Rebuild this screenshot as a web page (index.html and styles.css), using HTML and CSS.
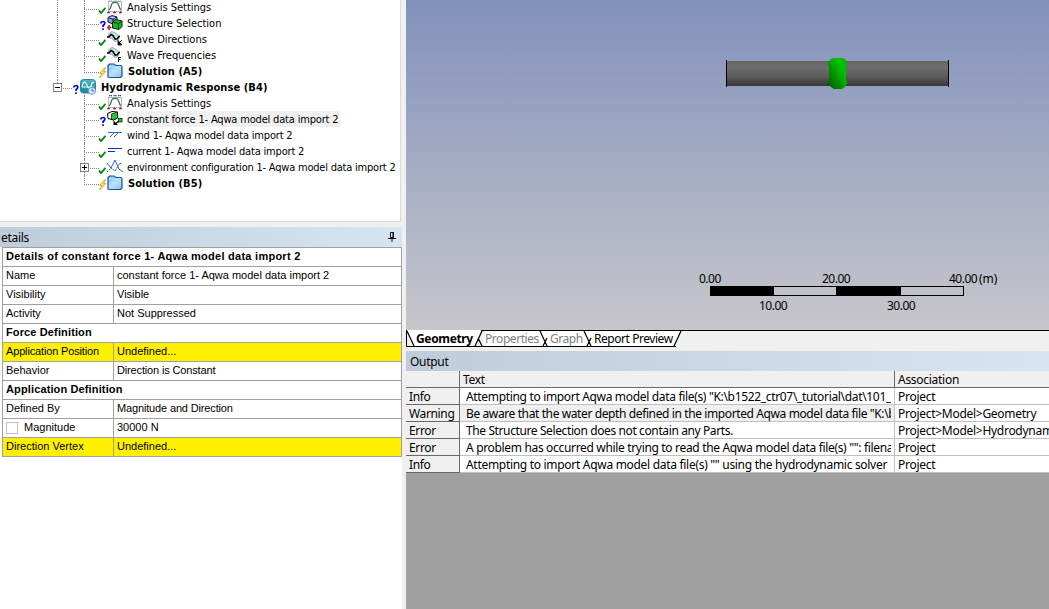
FILE: index.html
```
<!DOCTYPE html>
<html lang="en">
<head>
<meta charset="utf-8">
<title>Hydrodynamic Response</title>
<link rel="stylesheet" href="styles.css">
</head>
<body>
<svg class="defs" width="0" height="0">
  <defs>
    <linearGradient id="fold" x1="0" y1="0" x2="1" y2="1"><stop offset="0" stop-color="#74bdf5"/><stop offset=".5" stop-color="#bde2fc"/><stop offset="1" stop-color="#7cc4f8"/></linearGradient>
    <linearGradient id="teal" x1="0" y1="0" x2="0" y2="1"><stop offset="0" stop-color="#58b5c4"/><stop offset="1" stop-color="#168499"/></linearGradient>
    <linearGradient id="ball" x1="0" y1="1" x2="1" y2="0"><stop offset="0" stop-color="#005c00"/><stop offset=".35" stop-color="#008c00"/><stop offset=".7" stop-color="#00c400"/><stop offset="1" stop-color="#00b000"/></linearGradient>
    <linearGradient id="pipe" x1="0" y1="0" x2="0" y2="1"><stop offset="0" stop-color="#646464"/><stop offset=".25" stop-color="#6e6e6e"/><stop offset=".6" stop-color="#5c5c5c"/><stop offset="1" stop-color="#383838"/></linearGradient>
    <symbol id="check" viewBox="0 0 8 16"><path d="M1 11.500 L3 14 L7.500 9" fill="none" stroke="#088c10" stroke-width="1.900"/></symbol>
    <symbol id="question" viewBox="0 0 8 16"><path d="M2.500 8.500 Q3 6.500 5 6.500 Q7 6.700 6.800 8.500 Q6.500 9.800 5 10.500 V12 M5 13.200 V15" fill="none" stroke="#0008f4" stroke-width="1.700"/></symbol>
    <symbol id="bolt" viewBox="0 0 8 16"><path d="M7 4.500 L1.500 10.500 H4 L1.500 15 L8 8.500 H5.500 L8 4.500Z" fill="#ffe23c" stroke="#c79a16" stroke-width=".7"/></symbol>
    <symbol id="settings" viewBox="0 0 16 16"><path d="M1.500 2 V13 M14.500 2 V13 M1 2.500 H15 M1 12.500 H15" stroke="#b8b8b8" fill="none"/><path d="M2 11 C4 10 4 4.500 6 3.500 H10 C12 4.500 12 10 14 11" fill="none" stroke="#35784e" stroke-width="1.300"/><path d="M2 .5 H5 M6.500 .5 H9.500 M11 .5 H14" stroke="#2843bd" stroke-width="1.500" stroke-dasharray="1.300 .4"/><path d="M0 14 L1.500 12.500 L3 14Z M6 14 L7.500 12.500 L9 14Z M12 14 L13.500 12.500 L15 14Z" fill="#b80024" stroke="#b80024" stroke-width=".5"/></symbol>
    <symbol id="cubes" viewBox="0 0 16 16"><path d="M1 2.500 L5 .5 L10 2 V7 L6 9 L1 7Z M1 2.500 L6 4 L10 2 M6 4 V9" fill="#9299d1" stroke="#10194f"/><path d="M5.500 7 L9 4.500 L15 6 V11.500 L12 14.500 L5.500 13Z" fill="#10b92c" stroke="#002800"/><path d="M5.500 7 L11.500 8.500 L15 6 M11.500 8.500 V14" fill="none" stroke="#003b00"/><path d="M2 10 V15 M-.5 12.500 H4.500" stroke="#c51521" stroke-width="1.500"/></symbol>
    <symbol id="wave" viewBox="0 0 16 16"><path d="M1 6 C2 0 6 0 8 2 L12 5 C12 11 7 12 6 8Z" fill="#c4ecec" stroke="#777" stroke-width=".7"/><path d="M0 6 H2 L4 3.500 L6 4.500 L8 8 L10 8 L12 5.500 H13" fill="none" stroke="#000" stroke-width="1.600"/></symbol>
    <symbol id="folder" viewBox="0 0 16 16"><path d="M1 14 V2.500 L2.500 1 H7 L9 2.500 H14 L15 4 V13 L13.500 14.500 H2Z" fill="url(#fold)" stroke="#1b4f9d" stroke-width="1.200"/><path d="M2.500 4.500 L3.500 2.500" stroke="#e5f5ff"/></symbol>
    <symbol id="response" viewBox="0 0 16 16"><rect x=".5" y=".5" width="15" height="13.500" rx="3" fill="url(#teal)" stroke="#2d8497"/><path d="M2 8 C3 2 5 2 7 6 C9 12 11 8 12 4 L14 3 M2 8 H13" fill="none" stroke="#e1ffff" stroke-width="1.200"/><circle cx="12" cy="11.800" r="3.500" fill="#dce9ff" stroke="#7692d0"/><path d="M12 9.500 V12 H14" fill="none" stroke="#294a9d" stroke-width=".8"/></symbol>
    <symbol id="force" viewBox="0 0 16 16"><path d="M.5 2.500 L5 .5 L10.500 1 V7 L6.500 9 L1 7.500Z" fill="#fff" stroke="#000"/><path d="M4.500 3 L10.500 1 V7 L6.500 9 L4.500 8Z" fill="#15cc36" stroke="#000" stroke-width=".7"/><path d="M12 10 L8 13" stroke="#000" stroke-width="1.300"/><path d="M6.500 9.500 V14 H11Z" fill="#000"/><rect x="11.500" y="7.500" width="3.500" height="3.500" fill="#13ce33" stroke="#000" stroke-width=".7"/></symbol>
    <symbol id="wind" viewBox="0 0 16 16"><path d="M1 5.500 H15" stroke="#1d76bd"/><path d="M3 10 L7 6 M7 10 L11 6" stroke="#3a658b" stroke-width="1"/></symbol>
    <symbol id="current" viewBox="0 0 16 16"><path d="M1 5.500 H15 M1 8.500 H8" stroke="#0837a9"/></symbol>
    <symbol id="environment" viewBox="0 0 16 16"><path d="M0 4 L4 9 L8 1 L12 10 L16 13" fill="none" stroke="#2d62b6"/><path d="M0 13 L4 9 L8 12 L12 5 L15 4" fill="none" stroke="#2d62b6" stroke-dasharray="2 .7"/></symbol>
  </defs>
</svg>
<div class="app">
  <div class="left">
    <section class="tree">
      <div class="row leaf"><svg class="status"><use href="#check"/></svg><svg class="icon"><use href="#settings"/></svg><span class="short">Analysis Settings</span></div>
      <div class="row leaf"><svg class="status"><use href="#question"/></svg><svg class="icon"><use href="#cubes"/></svg><span class="short">Structure Selection</span></div>
      <div class="row leaf"><svg class="status"><use href="#check"/></svg><svg class="icon" viewBox="0 0 16 16"><use href="#wave"/><path d="M15 9 L12 12 M11 9.500 V14 H15Z" stroke="#000" stroke-width=".8"/></svg><span class="short">Wave Directions</span></div>
      <div class="row leaf"><svg class="status"><use href="#check"/></svg><svg class="icon" viewBox="0 0 16 16"><use href="#wave"/><path d="M14 10.500 H11.500 V15 M11.500 12.500 H13.500" fill="none" stroke="#000"/></svg><span class="short">Wave Frequencies</span></div>
      <div class="row leaf last"><svg class="status"><use href="#bolt"/></svg><svg class="icon"><use href="#folder"/></svg><span class="strong">Solution (A5)</span></div>
      <div class="row root"><i class="toggle"></i><svg class="status"><use href="#question"/></svg><svg class="icon"><use href="#response"/></svg><span class="strong">Hydrodynamic Response (B4)</span></div>
      <div class="row leaf under"><svg class="status"><use href="#check"/></svg><svg class="icon"><use href="#settings"/></svg><span class="short">Analysis Settings</span></div>
      <div class="row leaf under"><svg class="status"><use href="#question"/></svg><svg class="icon"><use href="#force"/></svg><span class="selected">constant force 1- Aqwa model data import 2</span></div>
      <div class="row leaf under"><svg class="status"><use href="#check"/></svg><svg class="icon"><use href="#wind"/></svg><span>wind 1- Aqwa model data import 2</span></div>
      <div class="row leaf under"><svg class="status"><use href="#check"/></svg><svg class="icon"><use href="#current"/></svg><span>current 1- Aqwa model data import 2</span></div>
      <div class="row leaf under"><i class="toggle plus"></i><svg class="status"><use href="#check"/></svg><svg class="icon"><use href="#environment"/></svg><span class="long">environment configuration 1- Aqwa model data import 2</span></div>
      <div class="row leaf under last"><svg class="status"><use href="#bolt"/></svg><svg class="icon"><use href="#folder"/></svg><span class="strong">Solution (B5)</span></div>
    </section>
    <section class="details">
      <header class="bar"><span class="bar-title">etails</span><svg class="pin" width="8" height="12"><path d="M2.500 1.500 H5.500 V6.500 H2.500Z M5 1 V7 M0 7.500 H8 M4 8 V11" fill="none" stroke="#111"/></svg></header>
      <div class="grid">
        <div class="group title">Details of constant force 1- Aqwa model data import 2</div>
        <div class="prop"><span>Name</span><span>constant force 1- Aqwa model data import 2</span></div>
        <div class="prop"><span>Visibility</span><span>Visible</span></div>
        <div class="prop"><span>Activity</span><span>Not Suppressed</span></div>
        <div class="group">Force Definition</div>
        <div class="prop missing"><span class="tight">Application Position</span><span>Undefined...</span></div>
        <div class="prop"><span>Behavior</span><span class="tight">Direction is Constant</span></div>
        <div class="group">Application Definition</div>
        <div class="prop"><span>Defined By</span><span class="tight">Magnitude and Direction</span></div>
        <div class="prop"><span><i class="box"></i>Magnitude</span><span>30000 N</span></div>
        <div class="prop missing"><span>Direction Vertex</span><span>Undefined...</span></div>
      </div>
    </section>
  </div>
  <div class="right">
    <section class="view">
      <svg width="643" height="330">
        <rect x="320" y="61" width="223" height="25" fill="url(#pipe)"/>
        <path d="M320.500 60 V87 M542.500 60 V87" stroke="#000"/>
        <path d="M425 59 L428 58 H436 L439 59 L441 62 V65 L440 67 V80 L441 81 V84 L439 87 L436 89 H428 L425 87 L422 84 V81 L423 80 V67 L422 65 V62Z" fill="url(#ball)"/>
        <rect x="304.500" y="286.500" width="253" height="9" fill="none" stroke="#000"/>
        <path d="M304 286 H368 V296 H304Z M430 286 H495 V296 H430Z"/>
        <g class="ticks"><text x="293" y="283">0.00</text><text x="416" y="283">20.00</text><text x="543" y="283">40.00</text><text x="573" y="283" class="unit">(m)</text><text x="353" y="310">10.00</text><text x="481" y="310">30.00</text></g>
      </svg>
    </section>
    <nav class="tabs">
      <svg class="tab-lines" width="643" height="17"><path d="M1 0 H75 L69 16 H7Z M79 1 H275 L268 16 H77Z" fill="#fff"/><path d="M75 .5 H643 M.5 0 V16.500 H270" fill="none" stroke="#000"/><path d="M1 1 L8 16 M76 1 L69 16 M72 8 L76 16 M134 1 L141 16 M141 8 L137 16 M178 1 L185 16 M185 8 L181 16 M275 1 L268 16" fill="none" stroke="#000" stroke-width="1.200"/></svg>
      <span class="tab active">Geometry</span><span class="tab muted">Properties</span><span class="tab muted">Graph</span><span class="tab report">Report Preview</span>
    </nav>
    <section class="output">
      <header class="bar"><span>Output</span></header>
      <div class="log">
        <div class="line head"><span></span><span>Text</span><span>Association</span></div>
        <div class="line"><span>Info</span><span><b class="path">Attempting to import Aqwa model data file(s) "K:\b1522_ctr07\_tutorial\dat\101_</b></span><span>Project</span></div>
        <div class="line current"><span>Warning</span><span><b>Be aware that the water depth defined in the imported Aqwa model data file "K:\b</b></span><span>Project&gt;Model&gt;Geometry</span></div>
        <div class="line"><span>Error</span><span><b>The Structure Selection does not contain any Parts.</b></span><span>Project&gt;Model&gt;Hydrodynam</span></div>
        <div class="line"><span>Error</span><span><b class="path">A problem has occurred while trying to read the Aqwa model data file(s) "": filena</b></span><span>Project</span></div>
        <div class="line"><span>Info</span><span><b class="solver">Attempting to import Aqwa model data file(s) "" using the hydrodynamic solver</b></span><span>Project</span></div>
      </div>
    </section>
  </div>
</div>
</body>
</html>
```
FILE: styles.css
```
* { box-sizing: border-box; }
body { margin: 0; overflow: hidden; color: #000; background: #f0f0f0; }
.defs { display: block; width: 0; height: 0; }
.app { display: flex; gap: 4px; width: 1049px; height: 609px; }
.left { display: flex; flex-direction: column; gap: 5px; width: 402px; background: #f0f0f0; }

.tree { width: 401px; height: 222px; background: #fff; border: solid #dcdcdc; border-width: 0 1px 1px 0; overflow: hidden; font: 11px/18px "DejaVu Sans Condensed", "DejaVu Sans", sans-serif; letter-spacing: -.18px; }
.row { position: relative; display: flex; height: 16px; white-space: nowrap; }
.row:first-child { height: 15px; line-height: 16px; }
.row:first-child svg { margin-top: -1px; }
.leaf { padding-left: 98px; }
.root { padding-left: 71px; }
.status { width: 8px; height: 16px; overflow: visible; flex: none; }
.icon { width: 16px; height: 16px; margin: 0 4px 0 1px; overflow: visible; flex: none; }
.row .strong { font-weight: bold; letter-spacing: .08px; padding-left: 1px; }
.short { letter-spacing: -.02px; }
.long { letter-spacing: -.21px; }
.selected { background: #f0f0f0; padding-right: 2px; }
.leaf::before { content: ""; position: absolute; left: 84px; top: 0; width: 14px; height: 9px; border: dotted #888; border-width: 0 0 1px 1px; }
.leaf:not(.last)::after { content: ""; position: absolute; left: 84px; top: 8px; height: 8px; border-left: 1px dotted #888; }
.row:not(.under):not(.root) { background: repeating-linear-gradient(#888 0 1px, #fff 1px 2px) 57px 0 / 1px 100% no-repeat; }
.root::before { content: ""; position: absolute; left: 57px; top: 0; width: 14px; height: 9px; border: dotted #888; border-width: 0 0 1px 1px; }
.toggle { position: absolute; z-index: 1; left: 53px; top: 4px; width: 9px; height: 9px; border: 1px solid #808080; background: linear-gradient(#000, #000) center / 5px 1px no-repeat, #fff; }
.plus { left: 80px; background: linear-gradient(#000, #000) center / 5px 1px no-repeat, linear-gradient(#000, #000) center / 1px 5px no-repeat, #fff; }

.details { flex: 1; width: 402px; background: #fff; }
.bar { display: flex; align-items: center; justify-content: space-between; height: 20px; background: linear-gradient(90deg, #bfcddb, #d7e5f2); font: 12px/20px "Noto Sans", sans-serif; letter-spacing: -.3px; }
.bar span { padding-top: 2px; }
.bar-title { padding-left: 1px; }
.pin { margin-right: 6px; }
.grid { margin-left: 2px; border: solid #a0a0a0; border-width: 1px 1px 0 1px; background: #fff; font: 11px/17px "Liberation Sans", Arial, sans-serif; }
.group, .prop { height: 19px; border-bottom: 1px solid #a0a0a0; white-space: nowrap; }
.group { padding-left: 3px; font-weight: bold; letter-spacing: .13px; }
.title { letter-spacing: .26px; }
.prop { display: grid; grid-template-columns: 111px 1fr; }
.prop span { padding-left: 3px; }
.prop span:first-child { border-right: 1px solid #a0a0a0; }
.tight { letter-spacing: -.15px; }
.missing { background: #fff000; }
.box { display: inline-block; width: 12px; height: 12px; margin-right: 6px; border: 1px solid #c0c0c0; vertical-align: -3px; }

.right { display: flex; flex-direction: column; width: 643px; background: #a0a0a0; }
.view { height: 330px; background: linear-gradient(#8291bc, #c7c6cb); }
.view svg { display: block; }
.ticks { font: 12px "Noto Sans", sans-serif; letter-spacing: -.5px; }
.unit { letter-spacing: 0; }
.tabs { position: relative; display: grid; grid-template-columns: 69px 65px 44px 1fr; height: 21px; background: #f0f0f0; font: 12px/18px "Noto Sans", sans-serif; white-space: nowrap; }
.tab-lines { position: absolute; left: 0; top: 0; }
.tab { position: relative; padding-left: 10px; letter-spacing: -.45px; }
.active { font-weight: bold; letter-spacing: -.35px; }
.muted { color: #808080; }
.output .bar { padding-left: 4px; }
.log { font: 12px/18px "Noto Sans", sans-serif; letter-spacing: -.28px; white-space: nowrap; }
.line { display: grid; grid-template-columns: 54px 435px 154px; height: 17px; background: #fff; }
.line span { border: solid #c0c0c0; border-width: 0 1px 1px 0; overflow: hidden; padding-left: 3px; }
.line span:last-child { border-right: 0; }
.line b { display: block; margin: 0 3px; font-weight: normal; letter-spacing: -.39px; overflow: hidden; }
.line .path { letter-spacing: -.33px; }
.line .solver { letter-spacing: -.3px; }
.line span:first-child, .head span { background: #f0f0f0; border-color: #696969; }
.line span:first-child { letter-spacing: -.35px; }
.current span { background: #f0f0f0; }
.current span:last-child { background: #fff; }
```
